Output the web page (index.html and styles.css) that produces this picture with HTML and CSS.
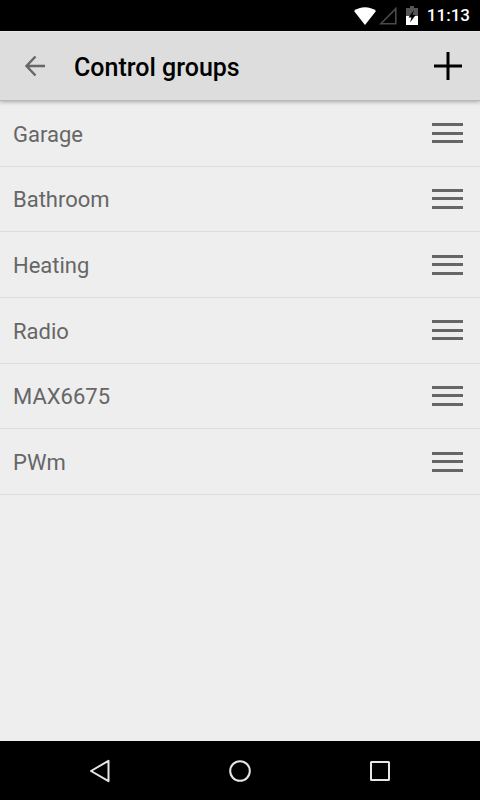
FILE: index.html
```html
<!DOCTYPE html>
<html lang="en">
<head>
  <meta charset="UTF-8">
  <meta name="viewport" content="width=device-width, initial-scale=1.0">
  <title>Control groups</title>
  <link rel="stylesheet" href="styles.css">
</head>
<body>

  <div class="status-bar">
    <svg class="wifi" width="22" height="18" viewBox="0 0 22 18">
      <path d="M0 4C6-1 16-1 22 4L11 18z" fill="#fff"/>
    </svg>
    <svg class="signal" width="18" height="18" viewBox="0 0 18 18">
      <path d="M16.8 1.6V16.8H1.8z" fill="none" stroke="#4a4a4a" stroke-width="1.6"/>
    </svg>
    <svg class="battery" width="12" height="19" viewBox="0 0 12 19">
      <path d="M4 0h4v2h4v8H0V2h4z" fill="#555"/>
      <path d="M0 10h12v9H0z" fill="#fff"/>
      <path d="M8 4L2.5 11.5H5.5L4 16.5L9.7 9H6.5z" fill="#000"/>
    </svg>
    <span class="clock">11:13</span>
  </div>

  <header class="toolbar">
    <button class="icon-btn" aria-label="Back">
      <svg width="22" height="22" viewBox="0 0 22 22" fill="none" stroke="#666" stroke-width="2.4">
        <path d="M21 11H3M11.5 1.5L2.5 11l9 9.5"/>
      </svg>
    </button>
    <h1>Control groups</h1>
    <button class="icon-btn" aria-label="Add group">
      <svg width="28" height="28" viewBox="0 0 28 28" stroke="#000" stroke-width="3">
        <path d="M0 14h28M14 0v28"/>
      </svg>
    </button>
  </header>

  <main>
    <ul class="groups">
      <li><span>Garage</span><button class="handle" aria-label="Move Garage"><i></i><i></i><i></i></button></li>
      <li><span>Bathroom</span><button class="handle" aria-label="Move Bathroom"><i></i><i></i><i></i></button></li>
      <li><span>Heating</span><button class="handle" aria-label="Move Heating"><i></i><i></i><i></i></button></li>
      <li><span>Radio</span><button class="handle" aria-label="Move Radio"><i></i><i></i><i></i></button></li>
      <li><span>MAX6675</span><button class="handle" aria-label="Move MAX6675"><i></i><i></i><i></i></button></li>
      <li><span>PWm</span><button class="handle" aria-label="Move PWm"><i></i><i></i><i></i></button></li>
    </ul>
  </main>

  <nav class="nav-bar">
    <button aria-label="Back">
      <svg width="24" height="24" viewBox="0 0 24 24">
        <path d="M20.5 1.8v20.4L3 12z"/>
      </svg>
    </button>
    <button aria-label="Home">
      <svg width="24" height="24" viewBox="0 0 24 24">
        <circle cx="12" cy="12" r="9.8"/>
      </svg>
    </button>
    <button aria-label="Recent apps">
      <svg width="24" height="24" viewBox="0 0 24 24">
        <rect x="3" y="3" width="18" height="18" rx="0.5"/>
      </svg>
    </button>
  </nav>

</body>
</html>
```
FILE: styles.css
```css
* {
  margin: 0;
  padding: 0;
  box-sizing: border-box;
}

body {
  display: flex;
  flex-direction: column;
  min-height: 100vh;
  background: #eee;
  font-family: Roboto, sans-serif;
}

button {
  background: none;
  border: none;
  cursor: pointer;
}

svg {
  display: block;
}

.status-bar {
  display: flex;
  justify-content: flex-end;
  align-items: center;
  height: 31px;
  padding-right: 10px;
  background: #000;
}

.signal {
  margin-left: 3px;
}

.battery {
  margin: 0 9px;
}

.clock {
  color: #fff;
  font-size: 17px;
  font-weight: 500;
  line-height: 31px;
}

.toolbar {
  display: flex;
  align-items: center;
  height: 70px;
  padding: 0 13px 0 16px;
  background: #ddd;
  border-top: 1px solid #e6e6e6;
  border-bottom: 1px solid #b8b8b8;
  box-shadow: 0 1px 4px rgba(0, 0, 0, 0.3);
}

.toolbar h1 {
  flex: 1;
  margin-left: 20px;
  padding-top: 2px;
  color: #000;
  font-size: 25px;
  font-weight: 500;
}

.icon-btn {
  display: flex;
  align-items: center;
  justify-content: center;
  width: 38px;
  height: 48px;
}

main {
  flex: 1;
}

.groups {
  display: grid;
  min-height: 394px;
  list-style: none;
}

.groups li {
  display: flex;
  align-items: center;
  justify-content: space-between;
  padding: 0 17px 0 13px;
  border-bottom: 1px solid #dcdcdc;
  color: #666;
  font-size: 22px;
}

.groups span {
  padding-top: 2px;
}

.handle {
  display: flex;
  flex-direction: column;
  justify-content: space-between;
  width: 31px;
  height: 20px;
}

.handle i {
  height: 3px;
  background: #666;
}

.nav-bar {
  display: flex;
  justify-content: center;
  gap: 56px;
  height: 59px;
  background: #000;
}

.nav-bar button {
  display: flex;
  align-items: center;
  justify-content: center;
  width: 84px;
}

.nav-bar svg {
  fill: none;
  stroke: #e6e6e6;
  stroke-width: 2;
  stroke-linejoin: round;
}
```
